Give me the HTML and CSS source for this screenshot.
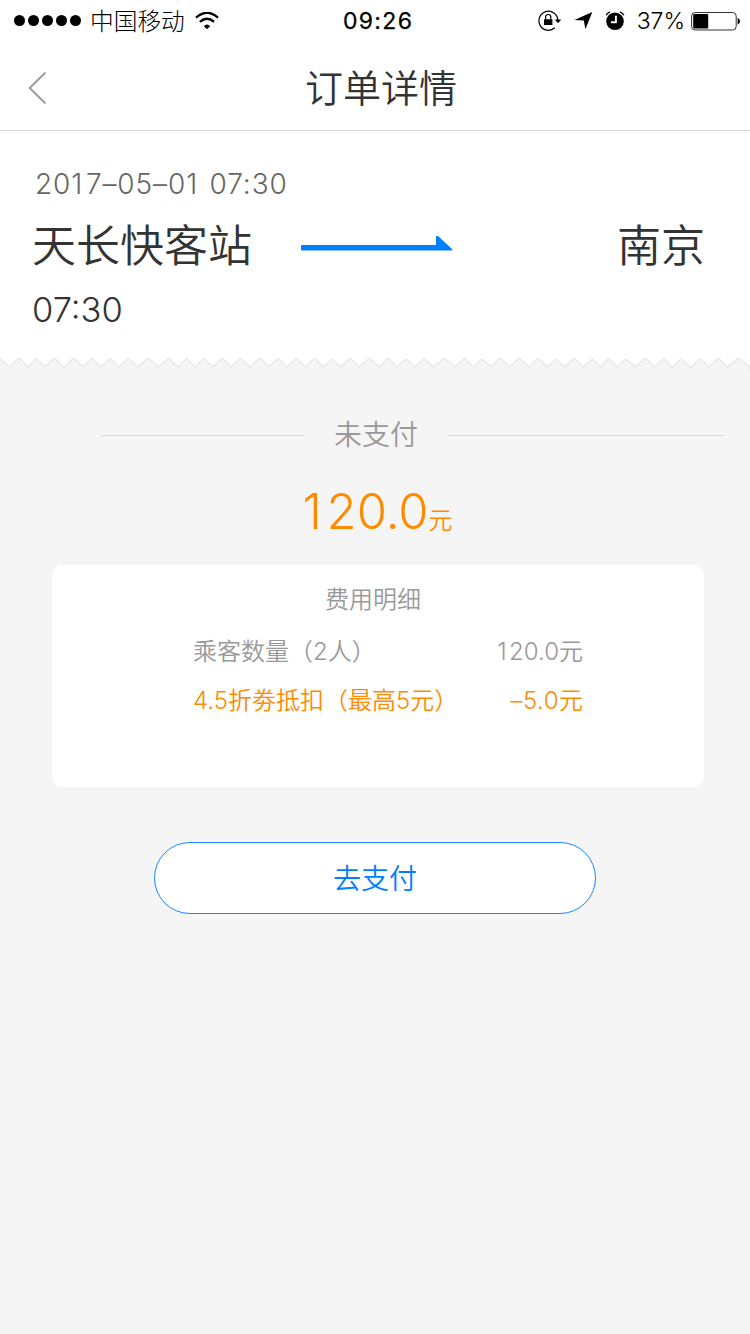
FILE: index.html
```html
<!DOCTYPE html>
<html lang="zh-CN">
<head>
<meta charset="utf-8">
<title>订单详情</title>
<link rel="stylesheet" href="styles.css">
</head>
<body>
<header class="status">
  <div class="status-left">
    <svg class="signal" width="70" height="12" viewBox="0 0 70 12"><circle cx="5.5" cy="6.5" r="5.5"/><circle cx="19.5" cy="6.5" r="5.5"/><circle cx="33.5" cy="6.5" r="5.5"/><circle cx="47.5" cy="6.5" r="5.5"/><circle cx="61.5" cy="6.5" r="5.5"/></svg>
    <span class="carrier">中国移动</span>
    <svg class="wifi" width="24" height="18" viewBox="0 0 24 18"><path d="M1 5.7Q12-4.2 23 5.7M4.9 9.8Q12 3.7 19.1 9.8" fill="none" stroke="#000" stroke-width="2.3"/><path d="M12 17.3L8.8 14.2Q12 10.6 15.2 14.2Z"/></svg>
  </div>
  <span class="clock">09:26</span>
  <div class="status-right">
    <svg class="lock" width="24" height="22" viewBox="0 0 24 22"><path d="M16.8 17.8A9.5 9.5 0 1 1 19.9 10.2" fill="none" stroke="#000" stroke-width="1.2"/><path d="M16.8 9.4h6.4L20 13.2ZM6 9.3h8.4v5.8H6Z"/><path d="M7.6 9.5V7.1a2.6 2.6 0 0 1 5.2 0V9.5" fill="none" stroke="#000" stroke-width="1.2"/></svg>
    <svg class="locate" width="19" height="18" viewBox="0 0 19 18"><path d="M18.3 0L11.4 17.2L9.8 8.5L.5 8Z"/></svg>
    <svg class="alarm" width="20" height="20" viewBox="0 0 20 20"><circle cx="10" cy="10.3" r="8.8"/><path d="M1.1 4.3Q2.4 1.7 5.1 .9M18.9 4.3Q17.6 1.7 14.9 .9" fill="none" stroke="#000" stroke-width="1.3"/><path d="M10.9 4.8v6.4H6" fill="none" stroke="#fff" stroke-width="1.9"/></svg>
    <span class="percent">37%</span>
    <svg class="battery" width="50" height="20" viewBox="0 0 50 20"><rect x=".6" y="1.5" width="44.6" height="17.5" rx="3.5" fill="none" stroke="#333"/><rect x="2.2" y="3" width="15" height="14.5" rx="1"/><path d="M46.6 6.8Q49 7.8 49 10.3T46.6 13.8Z"/></svg>
  </div>
</header>
<nav class="nav">
  <svg class="back" width="20" height="34" viewBox="0 0 20 34"><path d="M17.5 1.5L1.7 17L17.5 32.5" fill="none" stroke="#999" stroke-width="1.9"/></svg>
  <h1 class="title">订单详情</h1>
</nav>
<section class="trip">
  <div class="date">20<em>1</em>7–05–0<em>1</em> 07:30</div>
  <div class="route">
    <span class="from">天长快客站</span>
    <svg class="arrow" width="152" height="16" viewBox="0 0 152 16"><path d="M1 9H135V1Q135 -.5 137 0L151 13Q152 14.5 150.5 14.5H1Q0 14.5 0 13.5V10Q0 9 1 9Z"/></svg>
    <span class="to">南京</span>
  </div>
  <div class="depart">07:30</div>
</section>
<svg class="tear" width="750" height="12" viewBox="0 0 750 12"><path d="M-2 -1L0 .5L9.7 9L19 0L28 9L36.3 .5L45 9L54.3 0L64 9L73.7 0L83 9L92 .5L101 9L110.3 .5L119 9L128 0L138 9L148.3 0L158.5 9L168.7 0L178 9L186.7 .5L195 9L203.7 .5L213 9L222.3 0L231 9L240.3 0L250 9L260 0L269 9L278 .5L287 9L296.3 0L305.7 9L314.7 0L323 9L332 1L341 9L350 0L359 9L369.3 0L379 9L388.7 0L397 9L406 1L415 9L424 0L433.5 9L444.3 0L455 9L464.7 0L473.5 9L482 1L491 9L500 0L509.5 9L519.3 0L529 9L538.3 0L547 9L556 1L565 9L574 0L583 9L592.3 1L600.5 9L608.7 0L617 9L626 1L635 9L645.3 0L654.5 9L663.7 .5L672 9L681 1L690.5 9L700.3 1L709.5 9L718.3 0L727.5 9L738.3 0L750 9V14H-2Z" fill="#f5f5f5" stroke="#e9e9e9" stroke-width="1.5"/></svg>
<main class="payment">
  <div class="state"><i class="rule rule-left"></i><span>未支付</span><i class="rule rule-right"></i></div>
  <div class="total"><span class="amount"><em>1</em>20.0</span><span class="unit">元</span></div>
  <section class="card">
    <h2 class="card-title">费用明细</h2>
    <div class="row"><span class="label">乘客数量（<b>2</b>人）</span><span class="value"><b><em>1</em>20.0</b>元</span></div>
    <div class="row discount"><span class="label"><b>4.5</b>折劵抵扣（最高<b>5</b>元）</span><span class="value"><b>–5.0</b>元</span></div>
  </section>
  <button class="pay">去支付</button>
</main>
</body>
</html>
```
FILE: styles.css
```css
* { box-sizing: border-box; }
body { margin: 0; width: 750px; height: 1334px; overflow: hidden; background: #f5f5f5; color: #333; font-family: "Noto Sans CJK SC", sans-serif; font-weight: 350; }
svg { display: block; flex: none; }
span { white-space: nowrap; }
em { font-style: normal; letter-spacing: .1em; }
b, .clock, .percent, .date, .depart, .amount { font-family: Inter, "Noto Sans CJK SC", sans-serif; font-weight: 300; }
.status { height: 40px; background: #fff; color: #000; display: grid; grid-template-columns: 1fr 70px 1fr; align-items: center; }
.status-left, .status-right { display: flex; align-items: center; height: 40px; }
.status-left { padding-left: 14px; }
.signal { margin-top: -1px; }
.carrier { margin: -2px 0 0 6px; font-size: 23.7px; line-height: 40px; font-weight: 300; }
.wifi { margin-left: 10px; }
.clock { font-size: 23px; font-weight: 400; line-height: 40px; letter-spacing: 1.3px; text-align: center; margin-left: 3px; padding-top: 1px; -webkit-text-stroke: .25px #000; }
.status-right { justify-content: flex-end; padding-right: 9px; }
.lock { margin-left: 0; }
.locate { margin-left: 12px; }
.alarm { margin-left: 12px; }
.percent { margin-left: 12px; padding-top: 1px; font-size: 23px; line-height: 40px; }
.battery { margin-left: 6px; }
.nav { height: 91px; background: #fff; border-bottom: 1px solid #d9d9d9; display: grid; grid-template-columns: 100px 1fr 100px; align-items: center; }
.back { margin: 6px 0 0 28px; }
.title { margin: 2px 0 0 12px; font-size: 38px; line-height: 60px; font-weight: 350; text-align: center; white-space: nowrap; }
.trip { height: 227px; background: #fff; padding: 32px 45px 0 32px; }
.date { padding-left: 3px; font-size: 28px; line-height: 42px; color: #666; letter-spacing: .9px; white-space: nowrap; }
.date em { letter-spacing: 3.6px; }
.route { display: flex; height: 66px; align-items: center; margin-top: 6px; font-size: 44px; line-height: 66px; }
.route span { margin-top: -2px; }
.arrow { margin: 0 0 0 49px; fill: #0080ff; }
.route .to { margin-left: auto; }
.depart { margin-top: 10px; font-size: 34.5px; line-height: 46px; }
.tear { background: #fff; }
.payment { display: flex; flex-direction: column; align-items: center; padding-top: 41px; }
.state { display: flex; width: 750px; height: 48px; align-items: center; padding: 0 26px 0 101px; color: #999; font-size: 28px; line-height: 48px; gap: 30px; }
.state span { margin-top: -4px; }
.rule { height: 1px; background: #d9d9d9; }
.rule-left { width: 203px; }
.rule-right { flex: 1; }
.total { display: flex; align-items: baseline; height: 70px; margin-top: 18px; color: #ff8a00; line-height: 70px; padding-left: 5px; }
.amount { font-size: 49px; }
.unit { font-size: 24px; }
.card { width: 652px; height: 222px; margin: 18px 0 0 6px; background: #fff; border-radius: 10px; padding: 13px 121px 0 141px; color: #999; font-size: 24px; }
.card-title { margin: 0 30px 0 0; font-size: 24px; line-height: 40px; font-weight: 350; text-align: center; }
.row { display: flex; justify-content: space-between; line-height: 48px; height: 48px; margin-top: 8px; }
.row b { font-size: 24px; }
.discount { color: #ff8a00; margin-top: 1px; }
.discount .value b { letter-spacing: .5px; }
.pay { width: 442px; height: 72px; margin: 55px 0 0; padding: 0 0 2px; border: 1.5px solid #1687ff; border-radius: 36px; background: #fff; color: #0080ff; font: 350 28px/66px "Noto Sans CJK SC", sans-serif; }
```
